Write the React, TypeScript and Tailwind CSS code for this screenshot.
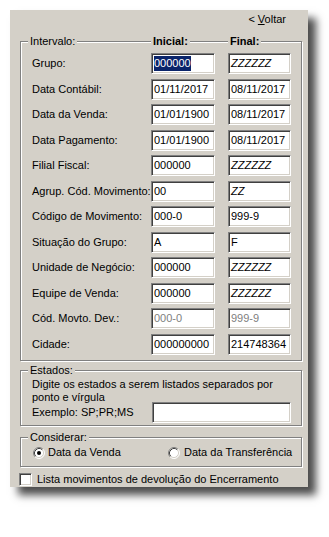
import React from 'react';

type Row = {
  label: string;
  ini: string;
  fim: string;
  zIni?: boolean;
  zFim?: boolean;
  disabled?: boolean;
  selected?: boolean;
};

const rows: Row[] = [
  { label: 'Grupo:', ini: '000000', fim: 'ZZZZZZ', zFim: true, selected: true },
  { label: 'Data Contábil:', ini: '01/11/2017', fim: '08/11/2017' },
  { label: 'Data da Venda:', ini: '01/01/1900', fim: '08/11/2017' },
  { label: 'Data Pagamento:', ini: '01/01/1900', fim: '08/11/2017' },
  { label: 'Filial Fiscal:', ini: '000000', fim: 'ZZZZZZ', zFim: true },
  { label: 'Agrup. Cód. Movimento:', ini: '00', fim: 'ZZ', zFim: true },
  { label: 'Código de Movimento:', ini: '000-0', fim: '999-9' },
  { label: 'Situação do Grupo:', ini: 'A', fim: 'F' },
  { label: 'Unidade de Negócio:', ini: '000000', fim: 'ZZZZZZ', zFim: true },
  { label: 'Equipe de Venda:', ini: '000000', fim: 'ZZZZZZ', zFim: true },
  { label: 'Cód. Movto. Dev.:', ini: '000-0', fim: '999-9', disabled: true },
  { label: 'Cidade:', ini: '000000000', fim: '214748364' },
];

// classic sunken edit box
const sunken =
  'bg-white border border-t-[#808080] border-l-[#808080] border-b-white border-r-white shadow-[inset_1px_1px_0_#404040,inset_-1px_-1px_0_#d4d0c8]';

const etched = 'border border-[#808080] shadow-[inset_1px_1px_0_#ffffff,1px_1px_0_#ffffff]';

const Field: React.FC<{ value: string; italic?: boolean; disabled?: boolean; selected?: boolean; className?: string }> = ({
  value,
  italic,
  disabled,
  selected,
  className = '',
}) => (
  <div className={`h-[21px] flex items-center pl-[2px] ${sunken} ${className}`}>
    <span
      className={`leading-[15px] ${italic ? 'italic' : ''} ${disabled ? 'text-[#808080]' : ''} ${
        selected ? 'bg-[#0a246a] text-white' : ''
      }`}
    >
      {value}
    </span>
  </div>
);

const Radio: React.FC<{ checked?: boolean }> = ({ checked }) => (
  <svg width="12" height="12" viewBox="0 0 12 12" className="shrink-0">
    <circle cx="6" cy="6" r="5" fill="#ffffff" />
    <path d="M9.89 2.11 A5.5 5.5 0 0 0 2.11 9.89" stroke="#808080" fill="none" />
    <path d="M2.11 9.89 A5.5 5.5 0 0 0 9.89 2.11" stroke="#ffffff" fill="none" />
    <path d="M9.18 2.82 A4.5 4.5 0 0 0 2.82 9.18" stroke="#404040" fill="none" />
    <path d="M2.82 9.18 A4.5 4.5 0 0 0 9.18 2.82" stroke="#d4d0c8" fill="none" />
    {checked && <circle cx="6" cy="6" r="2" fill="#000000" />}
  </svg>
);

const Legend: React.FC<{ children: React.ReactNode; className?: string }> = ({ children, className = '' }) => (
  <span className={`bg-[#d4d0c8] px-[2px] ${className}`}>{children}</span>
);

const App: React.FC = () => {
  return (
    <div className="w-[329px] h-[537px] bg-white pt-[10px] pl-[10px] font-['Liberation_Sans',Arial,sans-serif] text-[11px] leading-[13px] text-black">
      <div className="w-[298px] h-[477px] bg-[#d4d0c8] shadow-[8px_8px_8px_rgba(0,0,0,0.7)] flex flex-col">
        {/* Voltar */}
        <div className="flex justify-end pr-[22px] pt-[3px]">
          <span>
            &lt; <span className="underline">V</span>oltar
          </span>
        </div>

        {/* Intervalo */}
        <div className={`ml-[10px] mt-[15px] w-[282px] ${etched} pb-[5px]`}>
          <div className="-mt-[7px] grid grid-cols-[119px_77px_63px] pl-[11px] h-[13px]">
            <div>
              <Legend className="-ml-[4px]">Intervalo:</Legend>
            </div>
            <div>
              <Legend className="font-bold">Inicial:</Legend>
            </div>
            <div>
              <Legend className="font-bold">Final:</Legend>
            </div>
          </div>
          <div className="mt-[5px] flex flex-col gap-[4.5px] pl-[11px]">
            {rows.map((r) => (
              <div key={r.label} className="grid grid-cols-[119px_64px_13px_63px] items-center">
                <span>{r.label}</span>
                <Field value={r.ini} italic={r.zIni} disabled={r.disabled} selected={r.selected} />
                <span />
                <Field value={r.fim} italic={r.zFim} disabled={r.disabled} />
              </div>
            ))}
          </div>
        </div>

        {/* Estados */}
        <div className={`ml-[10px] mt-[9px] w-[282px] ${etched} pb-[2px]`}>
          <div className="-mt-[7px] pl-[7px] h-[13px]">
            <Legend>Estados:</Legend>
          </div>
          <div className="mt-[1px] pl-[11px]">
            <p>Digite os estados a serem listados separados por</p>
            <p>ponto e vírgula</p>
          </div>
          <div className="-mt-[2px] flex items-center pl-[11px] pr-[10px]">
            <span className="flex-1">Exemplo: SP;PR;MS</span>
            <div className={`w-[139px] h-[21px] ${sunken}`} />
          </div>
        </div>

        {/* Considerar */}
        <div className={`ml-[10px] mt-[11px] w-[282px] ${etched} pb-[6px]`}>
          <div className="-mt-[7px] pl-[7px] h-[13px]">
            <Legend>Considerar:</Legend>
          </div>
          <div className="mt-[2px] h-[14px] flex items-center pl-[12px]">
            <label className="flex items-center gap-[3px] w-[135px]">
              <Radio checked />
              <span>Data da Venda</span>
            </label>
            <label className="flex items-center gap-[4px]">
              <Radio />
              <span>Data da Transferência</span>
            </label>
          </div>
        </div>

        {/* Checkbox */}
        <label className="mt-[6px] ml-[9px] flex items-center gap-[5px]">
          <div className={`w-[13px] h-[13px] ${sunken}`} />
          <span>Lista movimentos de devolução do Encerramento</span>
        </label>
      </div>
    </div>
  );
};

export default App;
